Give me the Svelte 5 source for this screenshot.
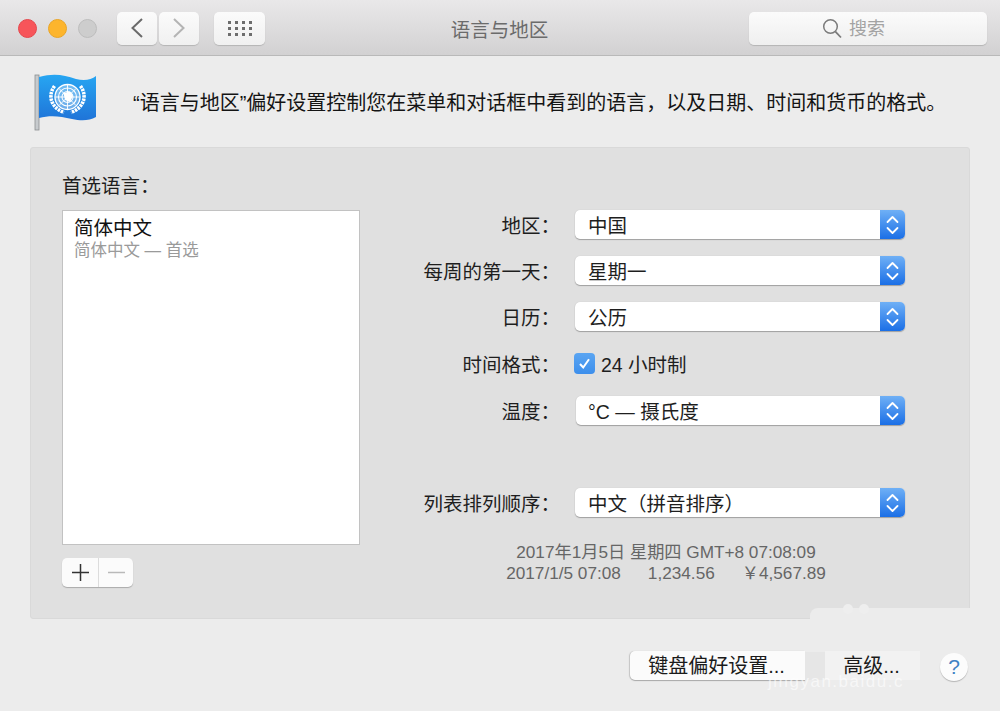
<script>
  const rows = [
    { label: '地区：', value: '中国', cls: 'r1' },
    { label: '每周的第一天：', value: '星期一', cls: 'r2' },
    { label: '日历：', value: '公历', cls: 'r3' }
  ];
  const dots = Array.from({ length: 12 });
</script>

{#snippet stepper()}
  <span class="step">
    <svg width="25" height="30" viewBox="0 0 25 30">
      <path d="M7.5 12 L12.5 7 L17.5 12 M7.5 18 L12.5 23 L17.5 18" fill="none" stroke="#fff" stroke-width="1.8" stroke-linecap="round" stroke-linejoin="round" />
    </svg>
  </span>
{/snippet}

<div class="win">
  <header class="bar">
    <div class="lights">
      <span class="light red"></span>
      <span class="light yellow"></span>
      <span class="light grey"></span>
    </div>
    <div class="nav">
      <button class="tb back" aria-label="后退">
        <svg width="16" height="22" viewBox="0 0 16 22"><path d="M13 2 L3.5 11 L13 20" fill="none" stroke="#6a6a6a" stroke-width="2" /></svg>
      </button>
      <button class="tb fwd" aria-label="前进">
        <svg width="16" height="22" viewBox="0 0 16 22"><path d="M3 2 L12.5 11 L3 20" fill="none" stroke="#b4b4b4" stroke-width="2" /></svg>
      </button>
    </div>
    <button class="tb all" aria-label="全部显示">
      <span class="dots">{#each dots as _}<i></i>{/each}</span>
    </button>
    <h1 class="title">语言与地区</h1>
    <div class="search">
      <svg width="20" height="21" viewBox="0 0 20 21"><circle cx="8.5" cy="8.5" r="6.8" fill="none" stroke="#7b7b7b" stroke-width="1.5" /><path d="M13.4 13.6 L19 19.5" stroke="#7b7b7b" stroke-width="1.8" /></svg>
      <span class="search-text">搜索</span>
    </div>
  </header>

  <section class="intro">
    <svg class="flag" width="64" height="58" viewBox="0 0 64 58">
      <defs>
        <linearGradient id="fl" x1="0" y1="0" x2="0" y2="1">
          <stop offset="0" stop-color="#27a6f2" />
          <stop offset="1" stop-color="#1f74d8" />
        </linearGradient>
      </defs>
      <rect x="1" y="1" width="4" height="55" fill="#c6cacd" stroke="#8c8f91" stroke-width=".8" />
      <path d="M5 3 C20 -1 30 1 42 5 C50 7 57 6 62 2 L62 43 C55 47 47 47 38 45 C26 42 16 41 5 44 Z" fill="url(#fl)" />
      <circle cx="33.500" cy="23" r="13" fill="#fff" opacity=".35" />
      <g fill="none" stroke="#fff">
        <circle cx="33.500" cy="23" r="12.500" stroke-width="1.300" />
        <circle cx="33.500" cy="23" r="9" stroke-width="1.100" />
        <circle cx="33.500" cy="23" r="5.500" stroke-width="1.100" />
        <path d="M33.500 11 V35 M21.500 23 H45.500 M25 14.500 L42 31.500 M42 14.500 L25 31.500" stroke-width=".9" />
        <path d="M20.500 12 C14 21 16 33 30 38.500 M46.500 12 C53 21 51 33 37 38.500" stroke-width="3.600" stroke-dasharray="2.500 .8" />
      </g>
      <path d="M29.500 19 L36 17.500 L39 22 L36 28 L31 26 Z" fill="#fff" />
    </svg>
    <p>“语言与地区”偏好设置控制您在菜单和对话框中看到的语言，以及日期、时间和货币的格式。</p>
  </section>

  <main class="panel">
    <div class="left">
      <div class="lang-label">首选语言：</div>
      <div class="list">
        <div class="item">简体中文</div>
        <div class="sub">简体中文 — 首选</div>
      </div>
      <div class="pm">
        <button class="pm-btn" aria-label="添加">
          <svg width="17" height="17" viewBox="0 0 17 17"><path d="M8.5 0 V17 M0 8.5 H17" stroke="#333" stroke-width="1.5" /></svg>
        </button>
        <button class="pm-btn" aria-label="移除">
          <svg width="17" height="17" viewBox="0 0 17 17"><path d="M0 8.5 H17" stroke="#b9b9b9" stroke-width="1.5" /></svg>
        </button>
      </div>
    </div>

    <div class="right">
      {#each rows as r}
        <div class="row {r.cls}">
          <span class="lab">{r.label}</span>
          <div class="sel"><span class="val">{r.value}</span>{@render stepper()}</div>
        </div>
      {/each}
      <div class="row r4">
        <span class="lab">时间格式：</span>
        <span class="check">
          <span class="box">
            <svg width="15" height="15" viewBox="0 0 15 15"><path d="M3 8 L6.2 11.5 L12 3.2" fill="none" stroke="#fff" stroke-width="2" /></svg>
          </span>
          <span class="chk-text">24 小时制</span>
        </span>
      </div>
      <div class="row r5">
        <span class="lab">温度：</span>
        <div class="sel temp"><span class="val">°C — 摄氏度</span>{@render stepper()}</div>
      </div>
      <div class="row r6">
        <span class="lab">列表排列顺序：</span>
        <div class="sel"><span class="val">中文（拼音排序）</span>{@render stepper()}</div>
      </div>
      <div class="sample">
        <div>2017年1月5日 星期四 GMT+8 07:08:09</div>
        <div class="nums"><span>2017/1/5 07:08</span><span>1,234.56</span><span>￥4,567.89</span></div>
      </div>
    </div>
  </main>

  <footer class="foot">
    <button class="fbtn kb">键盘偏好设置...</button>
    <button class="fbtn adv">高级...</button>
    <button class="help">?</button>
  </footer>

  <div class="patch p1"></div>
  <span class="bump b1"></span>
  <span class="bump b2"></span>
  <div class="patch p3"></div>
  <span class="mark">jingyan.baidu.c</span>
</div>

<style>
  :global(body) {
    margin: 0;
    background: #ececec;
  }
  .win {
    position: relative;
    width: 1000px;
    height: 711px;
    overflow: hidden;
    background: #ececec;
    color: #1e1e1e;
    font-family: "Liberation Sans", "Noto Sans CJK SC", sans-serif;
  }
  button {
    font-family: inherit;
    padding: 0;
    cursor: default;
  }
  .bar {
    display: flex;
    align-items: center;
    height: 56px;
    box-sizing: border-box;
    padding: 1px 13px 0 18px;
    background: linear-gradient(#e9e8e9, #d2d1d2);
    border-bottom: 1px solid #b9b9b9;
  }
  .lights {
    display: flex;
    gap: 11px;
    width: 99px;
  }
  .light {
    width: 19px;
    height: 19px;
    border-radius: 50%;
    box-sizing: border-box;
  }
  .red { background: #f7555a; border: 1px solid #e5474c; }
  .yellow { background: #fdb52d; border: 1px solid #eaa526; }
  .grey { background: #cdcdcd; border: 1px solid #bdbdbd; }
  .nav {
    display: flex;
    gap: 2px;
    margin-right: 15px;
  }
  .tb {
    display: flex;
    align-items: center;
    justify-content: center;
    width: 40px;
    height: 33px;
    border: 0;
    border-radius: 5px;
    background: linear-gradient(#fbfbfb, #f0f0f0);
    box-shadow: 0 1px 1px #b4b4b4;
  }
  .all {
    width: 51px;
  }
  .dots {
    display: grid;
    grid-template-columns: repeat(4, 3px);
    gap: 3px 4px;
  }
  .dots i {
    width: 3px;
    height: 3px;
    background: #6d6d6d;
  }
  .title {
    flex: 1;
    margin: 0;
    padding-right: 15px;
    padding-top: 3px;
    text-align: center;
    font-size: 19.500px;
    line-height: 26px;
    font-weight: 400;
    color: #6b6b6b;
  }
  .search {
    display: flex;
    align-items: center;
    justify-content: center;
    gap: 7px;
    width: 238px;
    height: 33px;
    box-sizing: border-box;
    padding-right: 29px;
    border-radius: 5px;
    background: linear-gradient(#fbfbfb, #efefef);
    box-shadow: 0 1px 1px #b4b4b4;
    color: #a3a3a3;
    font-size: 18px;
    line-height: 26px;
  }
  .search-text {
    padding-top: 2px;
  }
  .intro {
    display: flex;
    align-items: flex-start;
    height: 91px;
    box-sizing: border-box;
    padding: 18px 0 0 34px;
  }
  .flag {
    flex: none;
  }
  .intro p {
    margin: 16px 0 0 35px;
    font-size: 20px;
    line-height: 26px;
    white-space: nowrap;
    color: #141414;
  }
  .panel {
    display: flex;
    width: 940px;
    height: 472px;
    box-sizing: border-box;
    margin-left: 30px;
    background: #e0e0e0;
    border: 1px solid #d9d9d9;
    border-radius: 3px;
  }
  .left {
    width: 298px;
    margin-left: 31px;
    padding-top: 25px;
  }
  .lang-label {
    font-size: 19.500px;
    line-height: 26px;
  }
  .list {
    height: 335px;
    box-sizing: border-box;
    margin-top: 11px;
    padding: 4px 11px;
    background: #fff;
    border: 1px solid #c2c2c2;
  }
  .item {
    font-size: 19.500px;
    line-height: 26px;
    color: #111;
  }
  .sub {
    font-size: 16.500px;
    line-height: 19px;
    color: #9a9a9a;
  }
  .pm {
    display: flex;
    width: 71px;
    height: 29px;
    margin-top: 13px;
    background: #fbfbfb;
    border-radius: 5px;
    box-shadow: 0 1px 1px #aaa;
  }
  .pm-btn {
    display: flex;
    align-items: center;
    justify-content: center;
    width: 36px;
    border: 0;
    background: none;
  }
  .pm-btn + .pm-btn {
    width: 35px;
    border-left: 1px solid #dcdcdc;
  }
  .right {
    display: flex;
    flex-direction: column;
    margin-left: 62px;
    padding-top: 62px;
  }
  .row {
    display: flex;
    align-items: center;
    height: 29px;
  }
  .r2, .r3 { margin-top: 17px; }
  .r4 { margin-top: 18px; }
  .r5 { margin-top: 18px; }
  .r6 { margin-top: 63px; }
  .lab {
    width: 138px;
    margin-right: 15px;
    padding-top: 2px;
    text-align: right;
    font-size: 19.500px;
    line-height: 26px;
    white-space: nowrap;
  }
  .sel {
    display: flex;
    align-items: center;
    justify-content: space-between;
    width: 330px;
    height: 29px;
    background: #fff;
    border-radius: 5px;
    box-shadow: 0 1px 1px #9f9f9f, 0 0 1px #bbb;
    overflow: hidden;
  }
  .temp {
    width: 329px;
    margin-left: 1px;
  }
  .val {
    padding-left: 13px;
    padding-top: 2px;
    font-size: 19.500px;
    line-height: 26px;
  }
  .temp .val {
    padding-left: 12px;
  }
  .step {
    display: flex;
    align-items: center;
    justify-content: center;
    width: 25px;
    height: 29px;
    background: linear-gradient(#6fb0f6, #1b6fe6);
  }
  .check {
    display: flex;
    align-items: center;
    gap: 6px;
    margin-left: -1px;
    height: 29px;
  }
  .box {
    display: flex;
    align-items: center;
    justify-content: center;
    width: 21px;
    height: 21px;
    border-radius: 4px;
    background: linear-gradient(#5aa5f2, #3d8fec);
  }
  .chk-text {
    padding-top: 2px;
    font-size: 19.500px;
    line-height: 26px;
  }
  .sample {
    margin-top: 25px;
    margin-left: 74px;
    width: 340px;
    text-align: center;
    font-size: 17.200px;
    line-height: 21px;
    color: #666;
  }
  .nums {
    display: flex;
    justify-content: center;
    gap: 27px;
    white-space: pre;
  }
  .foot {
    position: relative;
    display: flex;
    align-items: center;
    height: 91px;
    box-sizing: border-box;
    padding-top: 2px;
    padding-left: 630px;
  }
  .fbtn {
    height: 29px;
    border: 0;
    border-radius: 5px;
    background: #fbfbfb;
    box-shadow: 0 1px 1px #a8a8a8;
    font-size: 20px;
    line-height: 26px;
    color: #1a1a1a;
    white-space: nowrap;
  }
  .kb {
    width: 175px;
    padding-right: 2px;
    border-radius: 5px 0 0 5px;
    box-shadow: 0 1px 1px #a8a8a8, -1px 0 1px #c8c8c8;
  }
  .adv {
    width: 95px;
    margin-left: 20px;
    padding-right: 2px;
    border-radius: 0;
    background: #f2f2f2;
    box-shadow: none;
  }
  .help {
    width: 28px;
    height: 28px;
    margin-left: 20px;
    margin-top: 2px;
    border: 0;
    border-radius: 50%;
    background: #fcfcfc;
    box-shadow: 0 1px 1px #b5b5b5;
    font-size: 21px;
    font-weight: 400;
    color: #3f82c4;
  }
  .patch {
    position: absolute;
    background: #ececec;
  }
  .p1 {
    left: 810px;
    top: 608px;
    width: 165px;
    height: 14px;
    border-radius: 8px 0 0 0;
  }
  .bump {
    position: absolute;
    width: 10px;
    height: 10px;
    top: 604px;
    border-radius: 50%;
    background: #eeeeee;
  }
  .b1 { left: 843px; }
  .b2 { left: 859px; }
  .p3 {
    left: 805px;
    top: 652px;
    width: 20px;
    height: 28px;
    background: #e6e6e6;
  }
  .mark {
    position: absolute;
    left: 768px;
    top: 672px;
    font-size: 17px;
    line-height: 20px;
    letter-spacing: 1.500px;
    color: #fff;
    opacity: .6;
    white-space: nowrap;
  }
</style>
